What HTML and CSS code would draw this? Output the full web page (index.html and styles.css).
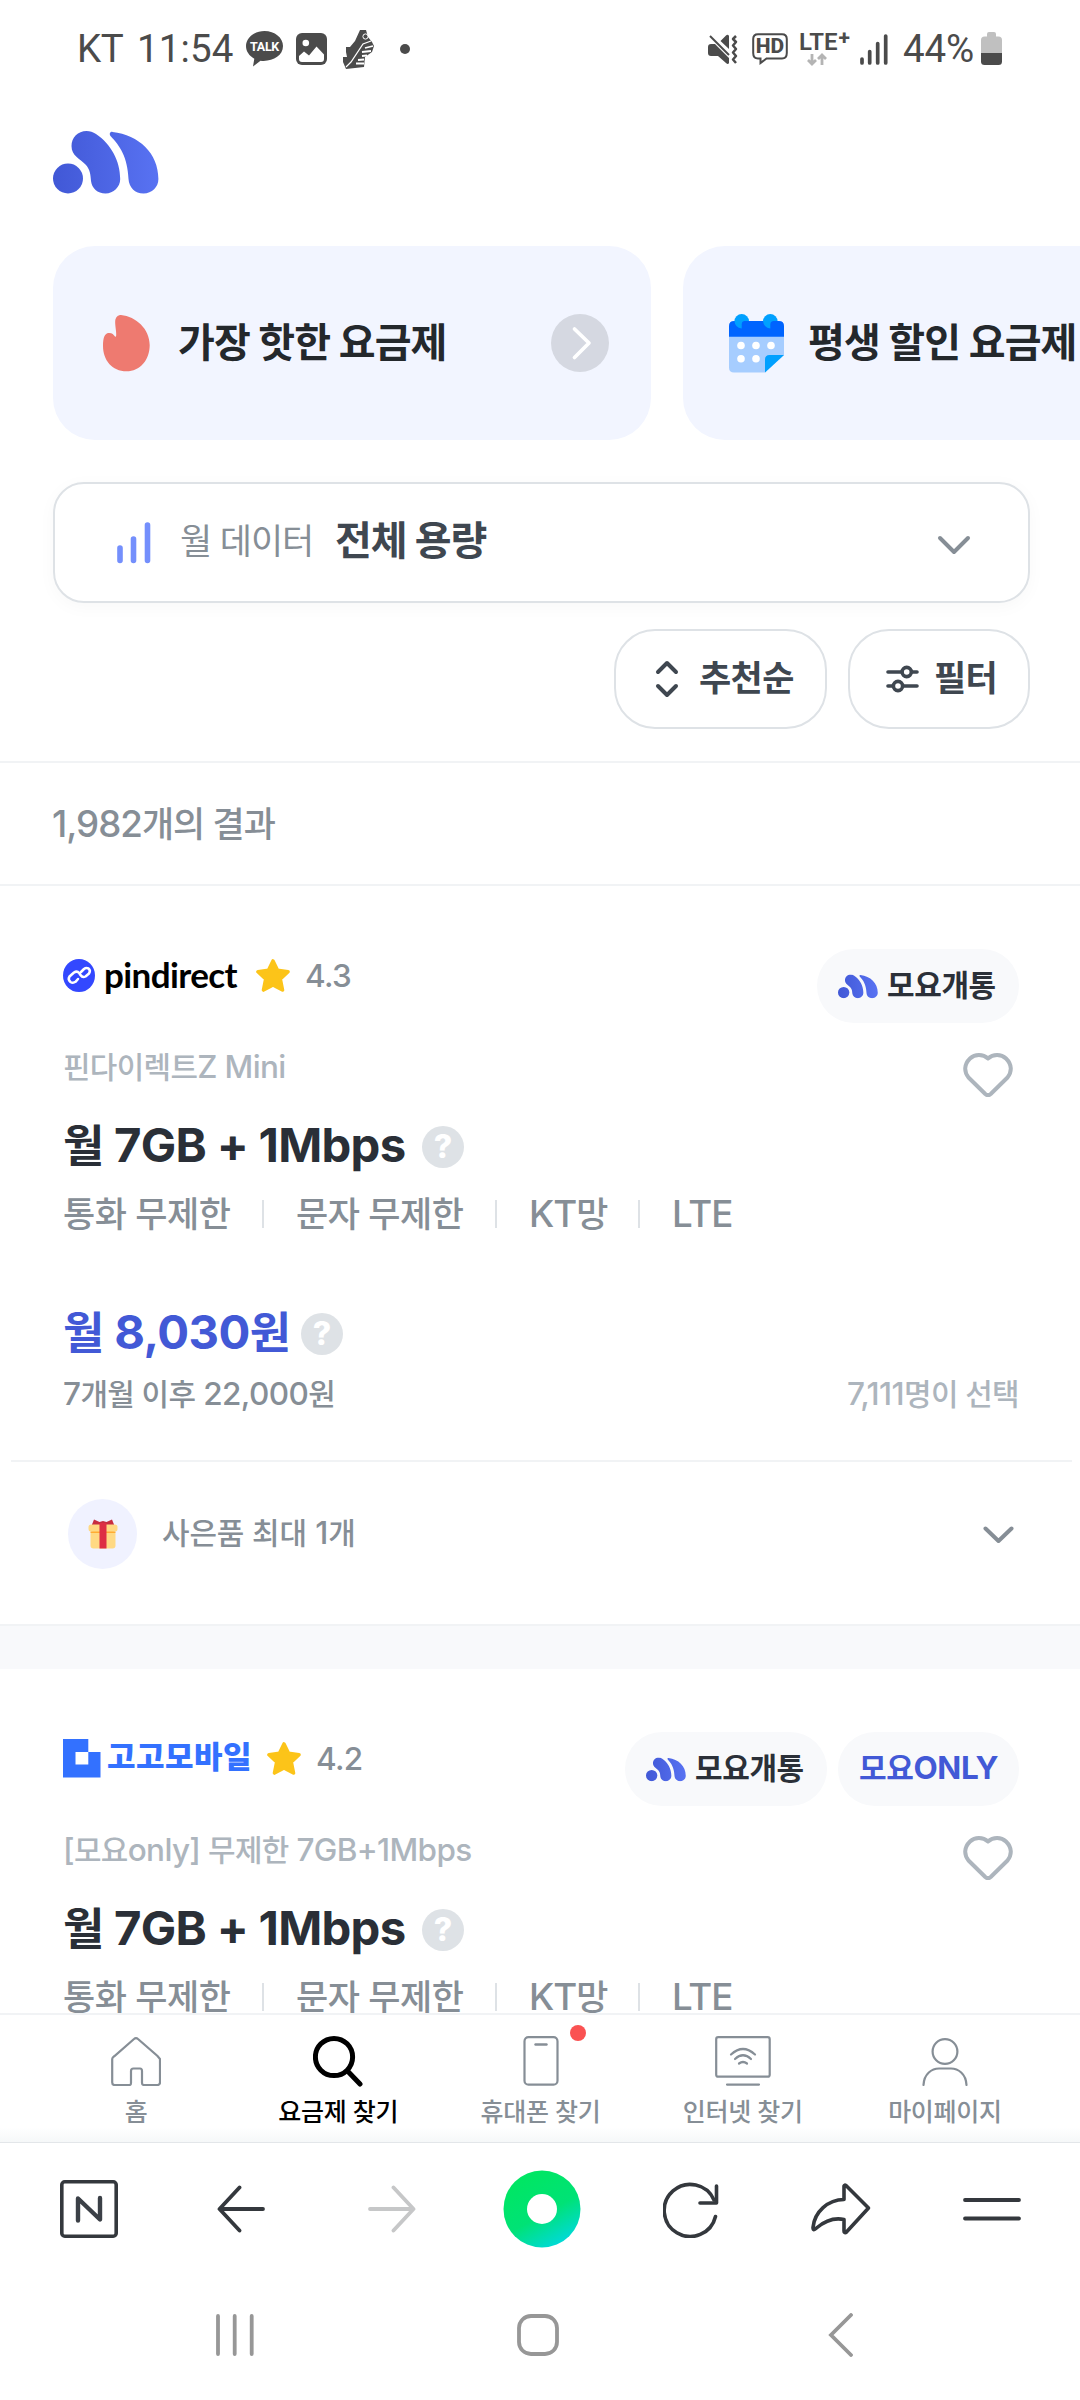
FILE: index.html
```html
<!DOCTYPE html>
<html lang="ko">
<head>
<meta charset="utf-8">
<title>모요 요금제 찾기</title>
<link rel="stylesheet" href="styles.css">
</head>
<body>
<svg class="defs" width="0" height="0" aria-hidden="true">
  <defs>
    <linearGradient id="moyo-grad" x1="0" y1="0" x2="105" y2="0" gradientUnits="userSpaceOnUse">
      <stop offset="0" stop-color="#4158d6"/><stop offset="1" stop-color="#5872f2"/>
    </linearGradient>
    <linearGradient id="green-grad" x1="0.3" y1="0.1" x2="0.8" y2="1">
      <stop offset="0" stop-color="#00e664"/><stop offset="0.5" stop-color="#00e276"/><stop offset="1" stop-color="#00d8e8"/>
    </linearGradient>
    <symbol id="moyo" viewBox="0 0 106 63">
      <g fill="url(#moyo-grad)">
        <circle cx="15" cy="47.5" r="15"/>
        <path d="M33.5 0C25 0 18.5 6.5 18.5 15C18.5 25 27 27.5 32.5 33.5C37 38.5 37.5 43 38 50C38.8 57 44.500 62.500 52.500 62.500C60.500 62.500 67.200 56 67.200 48C67.200 30 58 13 43 3C40 1 37 0 33.500 0Z"/>
        <path d="M59.500 .9C57 .6 56 3 57.500 5C67 15 74.500 26 75.500 48C76 56.500 82 62.500 90.500 62.500C99 62.500 105.400 56 105.400 48C105.400 22 86 4 59.500 .9Z"/>
      </g>
    </symbol>
    <symbol id="star" viewBox="0 0 34 33">
      <path d="M17 2L21.500 11.300L32 12.700L24.300 20L26.500 31L17 25.800L7.500 31L9.700 20L2 12.700L12.500 11.300Z" fill="#fcc419" stroke="#fcc419" stroke-width="3.600" stroke-linejoin="round"/>
    </symbol>
    <symbol id="heart" viewBox="0 0 50 44">
      <path d="M25 5.500C20 1 12 .8 7 5.500C.8 11.500 1 19 5.500 24.500L22.300 41Q25 43.300 27.700 41L44.500 24.500C49 19 49.200 11.500 43 5.500C38 .8 30 1 25 5.500Z" fill="none" stroke="#adb5bd" stroke-width="4" stroke-linejoin="round"/>
    </symbol>
  </defs>
</svg>
<div class="screen">
  <div class="viewport">
    <header class="status">
      <span class="carrier">KT</span>
      <span class="clock">11:54</span>
      <span class="talk"><svg width="37" height="36" viewBox="0 0 37 36"><path d="M18.500 0C8.300 0 0 6.700 0 15C0 20.400 3.400 25 8.300 27.700L7 35.500L14.500 29.700C26 31 37 25 37 15C37 6.700 28.700 0 18.500 0Z" fill="#4b4b4b"/></svg><b>TALK</b></span>
      <svg class="pic" width="31" height="32" viewBox="0 0 31 32"><rect width="31" height="32" rx="6" fill="#4b4b4b"/><circle cx="9.800" cy="10" r="3.300" fill="#fff"/><path d="M3 23L8 18.500L13 22.500L20.500 13.500L28 21.500V26Q28 29 25 29H6Q3 29 3 26Z" fill="#fff"/></svg>
      <svg class="shoe" width="32" height="40" viewBox="0 0 32 40"><path d="M17 1L23 1L25 8L29 13L31 17L29 23L22 28L21 38L3 40L0 33V28L4 28L3 23V18L7 18L12 12Z" fill="#4b4b4b"/><path d="M3 38L8 33L20 15L28 12" stroke="#fff" stroke-width="1.200" fill="none"/><path d="M19 27L24 26.500M19 23L28 22M22 19L30 17M15 31L21 30.500M13 34.500H21" stroke="#fff" stroke-width="1.800" fill="none"/><circle cx="22.500" cy="7.500" r="2.600" fill="none" stroke="#fff"/></svg>
      <i class="more-dot"></i>
      <svg class="mute" width="31" height="31" viewBox="0 0 31 31"><path d="M3 10H7L21 24V29Q20 31 18 29L10 22H3Q0 22 0 19V13Q0 10 3 10ZM12.500 7L18 1.500Q20 0 21 2V15Z" fill="#4b4b4b"/><path d="M2 2L21 21" stroke="#4b4b4b" stroke-width="2"/><path d="M28 2L25 5L28 8L25 11.500L28 15L25 18.500L28 22L25 25.500L28 29" fill="none" stroke="#4b4b4b" stroke-width="2.500" stroke-linejoin="round"/></svg>
      <span class="hd"><svg width="36" height="32" viewBox="0 0 36 32"><path d="M6 1.200H30Q34.800 1.200 34.800 6V20Q34.800 25.500 30 25.500H14.500L8.500 30V25.500H6Q1.200 25.500 1.200 20V6Q1.200 1.200 6 1.200Z" fill="none" stroke="#4b4b4b" stroke-width="2"/></svg><b>HD</b></span>
      <span class="lte"><b>LTE<sup>+</sup></b><svg width="20" height="13" viewBox="0 0 20 13"><path d="M5 1V11M1 7L5 11L9 7M15 12V2M11 6L15 2L19 6" fill="none" stroke="#b4b4b4" stroke-width="2.800"/></svg></span>
      <svg class="signal" width="28" height="31" viewBox="0 0 28 31"><path d="M2 25V29M9.700 17.500V29M17.700 9.500V29M25.700 2V29" stroke="#4b4b4b" stroke-width="3.700" stroke-linecap="round"/></svg>
      <span class="percent">44%</span>
      <svg class="battery" width="21" height="34" viewBox="0 0 21 34"><path d="M6 2Q6 0 8 0H13Q15 0 15 2V4.500H17.500Q21 4.500 21 8V21H0V8Q0 4.500 3.500 4.500H6Z" fill="#c0c0c0"/><path d="M0 21H21V29.500Q21 33 17.500 33H3.500Q0 33 0 29.500Z" fill="#4b4b4b"/></svg>
    </header>

    <div class="logo"><svg width="106" height="63"><use href="#moyo"/></svg></div>

    <div class="promos">
      <div class="promo">
        <svg class="flame" width="48" height="57" viewBox="0 0 48 57"><path d="M18 0C33 1.500 46.700 14 46.700 30C46.700 45 37 56.300 23.500 56.300C9 56.300 0 45 0 31C0 22 2 18.500 5.500 18C9 17.700 10.500 19.500 12 21.500C13.500 22.500 13.300 20 13 16C12.500 12 12 8 12.200 6C12.600 2 15 0 18 0Z" fill="#ee7a70"/></svg>
        <span class="promo-text">가장 핫한 요금제</span>
        <svg class="go" width="58" height="58" viewBox="0 0 58 58"><circle cx="29" cy="29" r="29" fill="#d5d8e1"/><path d="M23.500 15L38 29L23.500 43.500" fill="none" stroke="#fff" stroke-width="3.700" stroke-linecap="round" stroke-linejoin="round"/></svg>
      </div>
      <div class="promo">
        <svg class="calendar" width="55" height="59" viewBox="0 0 55 59"><path d="M0 22H55V41L36 58.500H5Q0 58.500 0 53.500Z" fill="#a6cdff"/><circle cx="12.700" cy="7.300" r="7.300" fill="#00a0ff"/><circle cx="41.300" cy="7.300" r="7.300" fill="#00a0ff"/><path d="M5 7H50Q55 7 55 12V22.700H0V12Q0 7 5 7Z" fill="#0064ff"/><path d="M5.400 7Q6 13.500 12.700 14.600V10Q12.700 7.500 15 7ZM34 7Q34.600 13.500 41.300 14.600V10Q41.300 7.500 44 7Z" fill="#00a0ff"/><g fill="#fff"><circle cx="12" cy="31.500" r="3.800"/><circle cx="27" cy="31.500" r="3.800"/><circle cx="42" cy="31.500" r="3.800"/><circle cx="12" cy="44.800" r="3.800"/><circle cx="27" cy="44.800" r="3.800"/></g><path d="M36 58.500V45.500Q36 41 40.500 41H55Z" fill="#00a0ff"/></svg>
        <span class="promo-text">평생 할인 요금제</span>
      </div>
    </div>

    <div class="data-select">
      <svg width="34" height="42" viewBox="0 0 34 42"><path d="M3 26V38.500M16.500 17V38.500M30.500 3V38.500" stroke="#748ffc" stroke-width="5.600" stroke-linecap="round"/></svg>
      <span class="select-label">월 데이터</span>
      <span class="select-value">전체 용량</span>
      <svg class="select-arrow" width="34" height="20" viewBox="0 0 34 20"><path d="M3 3L17 17L31 3" fill="none" stroke="#868e96" stroke-width="4" stroke-linecap="round" stroke-linejoin="round"/></svg>
    </div>

    <div class="chips">
      <div class="chip chip-sort">
        <svg width="24" height="38" viewBox="0 0 24 38"><path d="M3 12L12 3L21 12M3 26L12 35L21 26" fill="none" stroke="#3f4750" stroke-width="4" stroke-linecap="round" stroke-linejoin="round"/></svg>
        <span>추천순</span>
      </div>
      <div class="chip chip-filter">
        <svg width="33" height="28" viewBox="0 0 33 28"><g fill="none" stroke="#3f4750" stroke-width="3.600" stroke-linecap="round"><path d="M2 7H15M26 7H31M2 21H6.500M17.500 21H31"/><circle cx="20.700" cy="7" r="4.600"/><circle cx="12" cy="21" r="4.600"/></g></svg>
        <span>필터</span>
      </div>
    </div>

    <div class="result-count"><span>1,982<span class="ko">개의 결과</span></span></div>

    <article class="plan">
      <div class="plan-head">
        <div class="brand">
          <svg width="32" height="33" viewBox="0 0 32 33"><ellipse cx="16" cy="16.500" rx="16" ry="16.500" fill="#3348ff"/><g fill="none" stroke="#fff" stroke-width="2.500" stroke-linecap="round" stroke-linejoin="round"><path d="M15 20L12.500 22.800Q10 24.500 7.500 23Q4.500 20.500 6.500 17.500L11 13.500Q14 11.500 16.200 14L17.500 16Q19.500 19 22.500 17.500L26 14.500Q28 11.500 25.500 9.500Q23 8.500 21 10L18 13"/></g></svg>
          <span class="pindirect">pindirect</span>
          <svg class="star" width="34" height="33"><use href="#star"/></svg>
          <span class="score">4.3</span>
        </div>
        <div class="badges">
          <div class="badge badge-open"><svg width="40" height="25" viewBox="0 0 106 63"><use href="#moyo" width="106" height="63"/></svg><span>모요개통</span></div>
        </div>
      </div>
      <div class="plan-sub"><span class="name"><span class="ko">핀다이렉트</span>Z Mini</span><svg class="like" width="50" height="44"><use href="#heart"/></svg></div>
      <h2 class="plan-title"><span class="title-text"><span class="ko">월</span> 7GB + 1Mbps</span><i class="help">?</i></h2>
      <ul class="specs"><li class="wide">통화 무제한</li><li class="wide">문자 무제한</li><li class="net">KT<span class="ko">망</span></li><li class="lte-spec">LTE</li></ul>
      <div class="price"><span class="price-text"><span class="ko">월</span> 8,030<span class="ko">원</span></span><i class="help">?</i></div>
      <div class="after"><span class="later">7<span class="ko">개월 이후</span> 22,000<span class="ko">원</span></span><span class="picked">7,111<span class="ko">명이 선택</span></span></div>
      <div class="gift-row">
        <span class="gift"><svg width="30" height="30" viewBox="0 0 30 30"><path d="M4 5.500L6 .5L11.500 3L15 2L18.500 3L24 .5L26 5.500V7H4Z" fill="#c72d40"/><rect x="2.500" y="12" width="25" height="17.500" rx="3" fill="#ffd983"/><rect x=".5" y="5.500" width="29" height="7" rx="2.500" fill="#ffd983"/><path d="M2.500 12.500H27.500V14H2.500Z" fill="#ffac33"/><rect x="11.500" y="4" width="7" height="25.500" fill="#dd2e44"/></svg></span>
        <span class="gift-text"><span class="ko">사은품 최대</span> 1<span class="ko">개</span></span>
        <svg class="gift-arrow" width="31" height="18" viewBox="0 0 31 18"><path d="M2.500 2.500L15.500 15L28.500 2.500" fill="none" stroke="#868e96" stroke-width="4" stroke-linecap="round" stroke-linejoin="round"/></svg>
      </div>
    </article>
    <div class="gap"></div>

    <article class="plan">
      <div class="plan-head">
        <div class="brand">
          <svg width="38" height="39" viewBox="0 0 38 39"><path d="M0 0H25.300V13H37.500V38.500H0ZM12.500 13V25.500H25.300V13Z" fill="#3371ff" fill-rule="evenodd"/></svg>
          <span class="gogo">고고모바일</span>
          <svg class="star" width="34" height="33"><use href="#star"/></svg>
          <span class="score">4.2</span>
        </div>
        <div class="badges">
          <div class="badge badge-open"><svg width="40" height="25" viewBox="0 0 106 63"><use href="#moyo" width="106" height="63"/></svg><span>모요개통</span></div>
          <div class="badge badge-only"><span>모요<span class="only">ONLY</span></span></div>
        </div>
      </div>
      <div class="plan-sub"><span class="name name-long">[<span class="ko">모요</span>only] <span class="ko">무제한</span> 7GB+1Mbps</span><svg class="like" width="50" height="44"><use href="#heart"/></svg></div>
      <h2 class="plan-title"><span class="title-text"><span class="ko">월</span> 7GB + 1Mbps</span><i class="help">?</i></h2>
      <ul class="specs"><li class="wide">통화 무제한</li><li class="wide">문자 무제한</li><li class="net">KT<span class="ko">망</span></li><li class="lte-spec">LTE</li></ul>
    </article>
  </div>

  <nav class="tabs">
    <a class="tab"><svg width="50" height="50" viewBox="0 0 50 50"><path d="M1.200 23V46.500Q1.200 49 3.500 49H18.500Q20 49 20 47V35Q20 32.500 22.500 32.500H29Q31 32.500 31 35V47Q31 49 33 49H46.500Q49 49 49 46.500V23L46.500 20L27 3Q25 1 23 3L3.500 20Q1.200 21.500 1.200 23Z" fill="none" stroke="#868e96" stroke-width="2.200"/></svg><span>홈</span></a>
    <a class="tab tab-on"><svg width="50" height="52" viewBox="0 0 50 52"><g fill="none" stroke="#000" stroke-width="5" stroke-linecap="round"><circle cx="21" cy="22" r="18.600"/><path d="M35 36.500L47 49"/></g></svg><span>요금제 찾기</span></a>
    <a class="tab"><svg width="36" height="50" viewBox="0 0 36 50"><rect x="1.500" y="1.200" width="33" height="47.500" rx="4" fill="none" stroke="#868e96" stroke-width="2.200"/><path d="M12.500 8.500H23.500" stroke="#868e96" stroke-width="2.400" stroke-linecap="round"/></svg><span>휴대폰 찾기</span><i class="new-dot"></i></a>
    <a class="tab"><svg width="56" height="50" viewBox="0 0 56 50"><g fill="none" stroke="#868e96" stroke-width="2.200" stroke-linecap="round"><rect x="1.200" y="1.200" width="53.500" height="39.500" rx="2"/><path d="M12 48.600H44M16 18.500Q28 7.500 40 18.500M20 23Q28 15.500 36 23M24 27.500Q28 24.500 32 27.500"/></g></svg><span>인터넷 찾기</span></a>
    <a class="tab"><svg width="46" height="48" viewBox="0 0 46 48"><g fill="none" stroke="#868e96" stroke-width="2.200" stroke-linecap="round"><circle cx="23" cy="13.500" r="12.400"/><path d="M1.500 47C2 35.500 10 30.500 17 30.500H29C36 30.500 44 35.500 44.500 47"/></g></svg><span>마이페이지</span></a>
  </nav>

  <nav class="browser">
    <svg width="58" height="58" viewBox="0 0 58 58"><rect x="1.800" y="1.800" width="54.400" height="54.400" rx="3" fill="none" stroke="#34383d" stroke-width="3.600"/><path d="M18 40.500V18.500L40 39.500V18" fill="none" stroke="#3b4047" stroke-width="4.400" stroke-linecap="round" stroke-linejoin="round"/></svg>
    <svg class="nudge" width="48" height="48" viewBox="0 0 48 48"><path d="M22.500 2.500L2.500 24L22.500 45.500M3 24H46" fill="none" stroke="#34383d" stroke-width="3.800" stroke-linecap="round" stroke-linejoin="round"/></svg>
    <svg class="nudge" width="48" height="48" viewBox="0 0 48 48"><path d="M25.500 2.500L45.500 24L25.500 45.500M45 24H2" fill="none" stroke="#c6c7c8" stroke-width="3.800" stroke-linecap="round" stroke-linejoin="round"/></svg>
    <svg class="nudge" width="78" height="78" viewBox="0 0 78 78"><circle cx="39" cy="39" r="38.500" fill="url(#green-grad)"/><circle cx="39" cy="39" r="15" fill="#fff"/></svg>
    <svg width="56" height="58" viewBox="0 0 56 58"><path d="M52.500 36.500A26 26 0 1 1 51 20" fill="none" stroke="#34383d" stroke-width="3.600" stroke-linecap="round"/><path d="M53.500 6V23H37" fill="none" stroke="#34383d" stroke-width="3.600" stroke-linecap="round" stroke-linejoin="round"/></svg>
    <svg width="60" height="52" viewBox="0 0 60 52"><path d="M33 3Q33.500 1.500 35 2.500L57.500 25L35 49.500Q33 50 33 48V36.500Q19 33.500 5.500 45Q2 48.500 2 44.500C3.500 29 17 16.500 33 16.500Z" fill="none" stroke="#34383d" stroke-width="3.600" stroke-linejoin="round"/></svg>
    <svg width="58" height="24" viewBox="0 0 58 24"><path d="M2 3H56M2 21.500H56" stroke="#34383d" stroke-width="3.800" stroke-linecap="round"/></svg>
  </nav>

  <nav class="system">
    <svg width="38" height="42" viewBox="0 0 38 42"><path d="M2 2V40M18.700 2V40M35.700 2V40" stroke="#979797" stroke-width="3.800" stroke-linecap="round"/></svg>
    <svg width="42" height="42" viewBox="0 0 42 42"><rect x="2" y="2" width="38" height="38" rx="12" fill="none" stroke="#979797" stroke-width="3.800"/></svg>
    <svg width="25" height="44" viewBox="0 0 25 44"><path d="M23 2L3 22L23 42" fill="none" stroke="#979797" stroke-width="3.800" stroke-linecap="round"/></svg>
  </nav>
</div>
</body>
</html>
```
FILE: styles.css
```css
* { box-sizing: border-box; }
body { margin: 0; background: #fff; font-family: Inter, "Noto Sans CJK KR", sans-serif; }
svg { display: block; flex: none; }
.defs { position: absolute; }
i { font-style: normal; }
span { white-space: nowrap; }
.screen { width: 1080px; height: 2400px; overflow: hidden; display: flex; flex-direction: column; background: #fff; }
.viewport { height: 2013px; flex: none; overflow: hidden; }
.ko { font-size: .95em; }

/* status bar */
.status { display: flex; height: 98px; padding-left: 77px; align-items: center; color: #4b4b4b; font-family: Roboto, sans-serif; font-size: 38.500px; line-height: 98px; }
.carrier { width: 60px; letter-spacing: -.5px; }
.clock { width: 109px; letter-spacing: .1px; }
.talk { position: relative; }
.talk b { position: absolute; left: 0; width: 37px; top: 9px; text-align: center; color: #fff; font-size: 12.500px; line-height: 14px; letter-spacing: -.3px; }
.pic { margin-left: 13px; }
.shoe { margin-left: 16px; }
.more-dot { width: 10px; height: 10px; border-radius: 50%; background: #4b4b4b; margin-left: 25px; }
.mute { margin-left: 298px; }
.hd { position: relative; margin-left: 13px; }
.hd b { position: absolute; left: 0; width: 36px; top: 5px; text-align: center; font-size: 21px; line-height: 17px; font-weight: 800; }
.lte { margin-left: 11px; width: 51px; height: 33px; display: flex; flex-direction: column; }
.lte b { position: relative; font-size: 24px; line-height: 18px; font-weight: 600; height: 20px; }
.lte sup { position: absolute; right: 0; top: -4px; font-size: 21px; line-height: 18px; font-weight: 700; }
.lte svg { margin-left: 8px; }
.signal { margin-left: 10px; }
.percent { margin-left: 15px; width: 78px; letter-spacing: -.1px; }

.logo { height: 148px; padding: 33px 0 0 53px; }

.promos { display: flex; gap: 32px; padding-left: 53px; width: 1400px; }
.promo { display: flex; align-items: center; width: 598px; height: 194px; border-radius: 42px; background: #f2f5ff; padding-left: 50px; flex: none; }
.promo-text { font-size: 40px; font-weight: 700; color: #24282c; letter-spacing: -.9px; line-height: 60px; }
.flame { margin-right: 27px; }
.calendar { margin: 0 24px 0 -4px; }
.go { margin: 0 42px 0 auto; }

.data-select { display: flex; align-items: center; margin: 42px 50px 0 53px; height: 121px; padding: 0 57px 0 62px; border: 2px solid #dee2e6; border-radius: 31px; box-shadow: 0 4px 18px rgba(0,0,0,.03); line-height: 60px; }
.select-label { margin-left: 29px; margin-bottom: 3px; font-size: 35px; color: #868e96; width: 155px; letter-spacing: -1.100px; }
.select-value { font-size: 40px; margin-bottom: 3px; font-weight: 700; color: #3f4750; letter-spacing: -1.100px; }
.select-arrow { margin-left: auto; margin-top: 4px; }

.chips { display: flex; justify-content: flex-end; gap: 21px; padding: 26px 50px 32px 0; border-bottom: 2px solid #f1f3f5; height: 160px; }
.chip { display: flex; align-items: center; height: 100px; border: 2px solid #dee2e6; border-radius: 41px; font-size: 35px; font-weight: 700; color: #3f4750; line-height: 50px; letter-spacing: -.6px; }
.chip span { margin-bottom: 2px; }
.chip-sort { width: 213px; padding-left: 39px; }
.chip-sort span { margin-left: 20px; }
.chip-filter { width: 182px; padding-left: 36px; }
.chip-filter span { margin-left: 15px; }

.result-count { height: 123px; line-height: 121px; padding-left: 52px; border-bottom: 2px solid #f1f3f5; font-size: 36.750px; font-weight: 500; color: #868e96; letter-spacing: -1px; }

/* plan card */
.plan { padding-top: 63px; }
.plan-head { height: 74px; display: flex; justify-content: space-between; padding: 0 61px 0 63px; }
.brand { display: flex; align-items: center; height: 53px; }
.pindirect { width: 152px; margin-bottom: 4px; padding-left: 9px; font-family: Lato, sans-serif; font-weight: 700; font-size: 35px; line-height: 50px; letter-spacing: -.6px; color: #000; }
.gogo { width: 158px; margin-bottom: 3px; padding-left: 6px; font-size: 31px; font-weight: 900; letter-spacing: .5px; color: #3371ff; line-height: 50px; }
.brand .star { margin-left: 9px; margin-right: 15px; }
.brand .gogo + .star { margin-left: 8px; }
.score { font-size: 31.500px; line-height: 53px; font-weight: 500; color: #868e96; letter-spacing: -.7px; }
.badges { display: flex; gap: 11px; }
.badge { height: 74px; border-radius: 37px; background: #f8f9fb; display: flex; align-items: center; font-size: 30px; line-height: 44px; font-weight: 700; padding-left: 21px; letter-spacing: -.4px; }
.badge > span { margin-bottom: 2px; }
.badge-open { width: 202px; color: #2b3038; }
.badge-open span { margin-left: 9px; }
.badge-only { width: 181px; color: #4259d6; }
.only { font-size: 31.500px; }
.plan-sub { display: flex; justify-content: space-between; height: 68px; padding: 20px 67px 0 63px; font-size: 31.500px; line-height: 48px; color: #adb5bd; font-weight: 500; letter-spacing: -.65px; }
.like { margin-top: 10px; }
.plan-title { margin: 24px 0 0; height: 60px; padding-left: 63px; display: flex; align-items: center; font-size: 47.250px; line-height: 60px; font-weight: 700; color: #2a2f37; letter-spacing: -.7px; }
.title-text { width: 359px; }
.help { width: 42px; height: 42px; margin-top: 4px; border-radius: 50%; background: #dee2e6; color: #fff; font-size: 32px; font-weight: 800; line-height: 42px; text-align: center; letter-spacing: 0; }
.specs { list-style: none; margin: 15px 0 0; padding: 0 0 0 63px; height: 48px; display: flex; align-items: center; font-size: 36.750px; line-height: 48px; font-weight: 500; color: #868e96; letter-spacing: -1px; }
.specs li { display: flex; align-items: center; white-space: nowrap; }
.specs li + li::before { content: ""; width: 2px; height: 28px; background: #dee2e6; margin-right: 32px; }
.specs .wide { width: 199px; font-size: 35px; letter-spacing: -.5px; }
.specs .wide + .wide { width: 233px; }
.specs .net { width: 143px; }
.price { margin-top: 64px; height: 60px; padding-left: 63px; display: flex; align-items: center; font-size: 47.250px; line-height: 60px; font-weight: 700; color: #4259d6; letter-spacing: -.6px; }
.price-text { width: 238px; padding-top: 1px; }
.after { margin-top: 8px; display: flex; justify-content: space-between; padding: 0 61px 0 63px; height: 90px; font-size: 31.500px; line-height: 47px; font-weight: 500; color: #868e96; letter-spacing: -.6px; }
.picked { color: #adb5bd; }
.gift-row { margin: 0 8px 0 11px; border-top: 2px solid #f1f3f5; height: 164px; display: flex; padding: 37px 58px 0 57px; font-size: 31.500px; font-weight: 500; color: #868e96; line-height: 68px; letter-spacing: -.1px; }
.gift { width: 69px; height: 70px; border-radius: 50%; background: #f0f2ff; display: flex; align-items: center; justify-content: center; }
.gift-text { margin-left: 25px; }
.gift-arrow { margin: 27px 0 0 auto; }
.gap { height: 45px; background: #f8f9fb; border-top: 2px solid #f1f3f5; }

/* service tabs */
.tabs { height: 130px; flex: none; display: flex; padding: 0 34px 0 35px; border-top: 2px solid #f1f3f5; background: linear-gradient(#fff 112px, #f5f7f8 128px); border-bottom: 1px solid #e3e6e9; }
.tab { position: relative; flex: 1; display: flex; flex-direction: column; align-items: center; height: 128px; font-size: 25px; line-height: 32px; font-weight: 500; color: #868e96; padding-top: 21px; letter-spacing: -.3px; }
.tab span { position: absolute; top: 81px; left: 0; right: 0; text-align: center; }
.tab-on { color: #000; }
.tab-on svg { margin-top: -1px; }
.tab:last-child svg { margin-top: 2px; }
.new-dot { position: absolute; left: 131px; top: 10px; width: 16px; height: 16px; border-radius: 50%; background: #fa5252; }

/* browser toolbar and system keys */
.browser { height: 132px; flex: none; display: grid; grid-template-columns: repeat(7, 1fr); place-items: center; padding: 0 13px 0 14px; background: #fff; }
.browser .nudge { margin-left: 3px; }
.system { height: 125px; flex: none; display: grid; grid-template-columns: repeat(3, 1fr); place-items: center; padding: 0 88px 5px 84px; background: #fff; }
```
